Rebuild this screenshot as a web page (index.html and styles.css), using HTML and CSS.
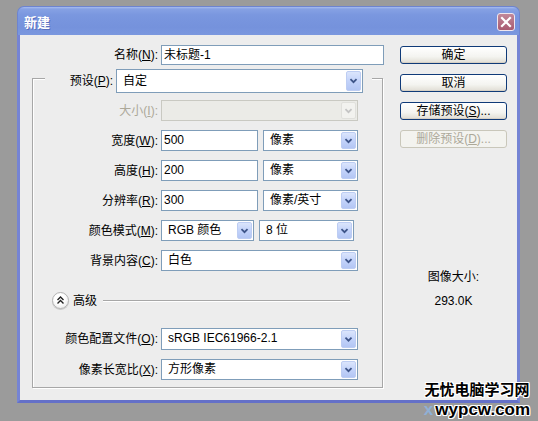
FILE: index.html
```html
<!DOCTYPE html>
<html lang="zh">
<head>
<meta charset="utf-8">
<title>新建</title>
<link rel="stylesheet" href="styles.css">
</head>
<body>
<div class="window">
  <div class="titlebar">
    <span class="title">新建</span>
    <span class="close"><svg width="16" height="16" viewBox="0 0 16 16"><path d="M4 4 L12 12 M12 4 L4 12" stroke="#fff" stroke-width="2.2" stroke-linecap="square"/></svg></span>
  </div>
  <div class="client">
    <div class="left">
      <div class="name-row">
        <span class="lbl lbl-name">名称(<u>N</u>):</span>
        <div class="input w-name">未标题-1</div>
      </div>
      <div class="group">
        <div class="preset-row">
          <span class="lbl lbl-preset">预设(<u>P</u>):</span>
          <div class="select w-preset"><span class="val">自定</span><span class="arrow"><svg width="15" height="17" viewBox="0 0 15 17"><path d="M4 7 L7.5 10.5 L11 7" fill="none" stroke="#3d5488" stroke-width="2"/></svg></span></div>
        </div>
        <div class="row r-size">
          <span class="lbl dis-text">大小(<u>I</u>):</span>
          <div class="select w-full disabled"><span class="val"></span><span class="arrow"><svg width="15" height="17" viewBox="0 0 15 17"><path d="M4 7 L7.5 10.5 L11 7" fill="none" stroke="#c4c4c4" stroke-width="2"/></svg></span></div>
        </div>
        <div class="row">
          <span class="lbl">宽度(<u>W</u>):</span>
          <div class="input w-num">500</div>
          <div class="select w-unit"><span class="val">像素</span><span class="arrow"><svg width="15" height="17" viewBox="0 0 15 17"><path d="M4 7 L7.5 10.5 L11 7" fill="none" stroke="#3d5488" stroke-width="2"/></svg></span></div>
        </div>
        <div class="row">
          <span class="lbl">高度(<u>H</u>):</span>
          <div class="input w-num">200</div>
          <div class="select w-unit"><span class="val">像素</span><span class="arrow"><svg width="15" height="17" viewBox="0 0 15 17"><path d="M4 7 L7.5 10.5 L11 7" fill="none" stroke="#3d5488" stroke-width="2"/></svg></span></div>
        </div>
        <div class="row">
          <span class="lbl">分辨率(<u>R</u>):</span>
          <div class="input w-num">300</div>
          <div class="select w-unit"><span class="val">像素/英寸</span><span class="arrow"><svg width="15" height="17" viewBox="0 0 15 17"><path d="M4 7 L7.5 10.5 L11 7" fill="none" stroke="#3d5488" stroke-width="2"/></svg></span></div>
        </div>
        <div class="row">
          <span class="lbl">颜色模式(<u>M</u>):</span>
          <div class="select w-mode"><span class="val">RGB 颜色</span><span class="arrow"><svg width="15" height="17" viewBox="0 0 15 17"><path d="M4 7 L7.5 10.5 L11 7" fill="none" stroke="#3d5488" stroke-width="2"/></svg></span></div>
          <div class="select w-unit"><span class="val">8 位</span><span class="arrow"><svg width="15" height="17" viewBox="0 0 15 17"><path d="M4 7 L7.5 10.5 L11 7" fill="none" stroke="#3d5488" stroke-width="2"/></svg></span></div>
        </div>
        <div class="row">
          <span class="lbl">背景内容(<u>C</u>):</span>
          <div class="select w-full"><span class="val">白色</span><span class="arrow"><svg width="15" height="17" viewBox="0 0 15 17"><path d="M4 7 L7.5 10.5 L11 7" fill="none" stroke="#3d5488" stroke-width="2"/></svg></span></div>
        </div>
        <div class="adv-row">
          <span class="adv-btn"><svg width="15" height="15" viewBox="0 0 15 15"><path d="M4.5 7 L7.5 4 L10.5 7 M4.5 10.5 L7.5 7.5 L10.5 10.5" fill="none" stroke="#222" stroke-width="1.4"/></svg></span>
          <span class="adv-text">高级</span>
          <span class="adv-line"></span>
        </div>
        <div class="row r-profile">
          <span class="lbl">颜色配置文件(<u>O</u>):</span>
          <div class="select w-full tall"><span class="val">sRGB IEC61966-2.1</span><span class="arrow"><svg width="15" height="18" viewBox="0 0 15 18"><path d="M4 7.5 L7.5 11 L11 7.5" fill="none" stroke="#3d5488" stroke-width="2"/></svg></span></div>
        </div>
        <div class="row">
          <span class="lbl">像素长宽比(<u>X</u>):</span>
          <div class="select w-full"><span class="val">方形像素</span><span class="arrow"><svg width="15" height="17" viewBox="0 0 15 17"><path d="M4 7 L7.5 10.5 L11 7" fill="none" stroke="#3d5488" stroke-width="2"/></svg></span></div>
        </div>
      </div>
    </div>
    <div class="right">
      <div class="btn">确定</div>
      <div class="btn">取消</div>
      <div class="btn">存储预设(<u>S</u>)...</div>
      <div class="btn btn-dis">删除预设(<u>D</u>)...</div>
      <div class="size-label">图像大小:</div>
      <div class="size-value">293.0K</div>
    </div>
  </div>
</div>
<div class="watermark">
  <div class="wm-cn">无忧电脑学习网</div>
  <div class="wm-en"><span class="wm-x">x</span>wypcw.com</div>
</div>
</body>
</html>
```

FILE: styles.css
```css
html, body {
  margin: 0;
  padding: 0;
}
body {
  background: #9b9b9b;
  width: 538px;
  height: 421px;
  overflow: hidden;
  position: relative;
  font-family: "Liberation Sans", "Noto Sans CJK SC", sans-serif;
  font-size: 12px;
  color: #000;
}
u {
  text-decoration: underline;
  text-underline-offset: 1px;
}
.window {
  margin: 6px 0 0 17px;
  width: 503px;
  height: 397px;
  display: flex;
  flex-direction: column;
}
.titlebar {
  height: 29px;
  border-radius: 7px 7px 0 0;
  background: linear-gradient(#a9bdf0 0px, #86a1e4 2px, #7a97df 8px, #7592dc 20px, #7b98df 29px);
  border: 1px solid #6d84d0;
  border-bottom: none;
  box-sizing: border-box;
  display: flex;
  align-items: center;
  justify-content: space-between;
  padding: 0 4px 0 6px;
}
.title {
  color: #fff;
  font-family: "Noto Sans CJK SC", sans-serif;
  font-weight: bold;
  font-size: 13px;
  line-height: 16px;
  text-shadow: 1px 1px 0 #5a6fbf;
  margin-top: 2px;
}
.close {
  width: 18px;
  height: 18px;
  box-sizing: border-box;
  border: 1px solid #efe6ee;
  border-radius: 3px;
  background: linear-gradient(#c1889a, #a85a70);
  display: flex;
  align-items: center;
  justify-content: center;
  margin-top: 1px;
}
.close svg {
  display: block;
}
.client {
  flex: 1;
  display: flex;
  background: #ededed;
  border: 3px solid #7584d4;
  border-top: none;
  border-bottom-color: #6470c8;
}
.left {
  width: 370px;
  padding-top: 10px;
}
.right {
  flex: 1;
  display: flex;
  flex-direction: column;
  align-items: center;
  padding-top: 11px;
}
.lbl {
  display: block;
  text-align: right;
  white-space: nowrap;
  line-height: 16px;
  font-size: 12px;
}
.name-row {
  display: flex;
  align-items: center;
  gap: 3px;
  height: 20px;
}
.lbl-name {
  width: 138px;
}
.input {
  height: 20px;
  box-sizing: border-box;
  border: 1px solid #7f9db9;
  background: #fff;
  padding-left: 2px;
  line-height: 18px;
  white-space: nowrap;
}
.w-name { width: 223px; }
.w-num { width: 97px; }
.group {
  margin: 13px 0 0 12px;
  width: 351px;
  height: 310px;
  box-sizing: border-box;
  border: 1px solid #a7a7a7;
  box-shadow: inset 1px 1px 0 #fff, 1px 1px 0 #fff;
}
.preset-row {
  display: flex;
  align-items: center;
  gap: 3px;
  margin: -10px 0 0 12px;
  width: 327px;
  height: 23px;
  background: #ededed;
}
.lbl-preset {
  width: 68px;
}
.row {
  display: flex;
  align-items: center;
  margin-top: 9px;
  height: 21px;
}
.row .lbl {
  width: 125px;
  margin-right: 3px;
}
.row .input + .select,
.row .select + .select {
  margin-left: 5px;
}
.row .input {
  height: 21px;
  line-height: 19px;
}
.r-size {
  margin-top: 8px;
}
.select {
  display: flex;
  align-items: stretch;
  height: 21px;
  box-sizing: border-box;
  border: 1px solid #7f9db9;
  background: #fff;
}
.select.tall {
  height: 22px;
}
.select .val {
  flex: 1;
  padding-left: 6px;
  line-height: 19px;
  white-space: nowrap;
  overflow: hidden;
}
.select .arrow {
  width: 15px;
  margin: 1px;
  box-sizing: border-box;
  border: 1px solid #bdcdf3;
  border-radius: 2px;
  background: linear-gradient(#dbe5fc, #c3d3fa 50%, #b3c6f4);
  display: flex;
  align-items: center;
  justify-content: center;
}
.select .arrow svg {
  display: block;
}
.select.disabled {
  border-color: #c9c9c2;
  background: #ebebe7;
}
.select.disabled .arrow {
  border-color: #e0e0dc;
  background: #f2f2ef;
}
.w-preset { width: 247px; height: 24px; }
.w-preset .val { line-height: 22px; }
.w-full { width: 197px; }
.w-unit { width: 95px; }
.w-mode { width: 93px; }
.dis-text {
  color: #aca899;
}
.adv-row {
  display: flex;
  align-items: center;
  margin: 21px 0 0 19px;
  height: 17px;
}
.adv-btn {
  width: 17px;
  height: 17px;
  box-sizing: border-box;
  border: 1px solid #b4b4b4;
  border-radius: 50%;
  background: radial-gradient(circle at 45% 40%, #ffffff 40%, #e2e2e2);
  display: flex;
  align-items: center;
  justify-content: center;
  box-shadow: 0 1px 0 #c8c8c8;
}
.adv-btn svg {
  display: block;
}
.adv-text {
  margin-left: 4px;
  line-height: 16px;
}
.adv-line {
  margin-left: 6px;
  width: 247px;
  height: 1px;
  background: #a7a7a7;
  box-shadow: 0 1px 0 #fff;
}
.r-profile {
  margin-top: 19px;
  height: 22px;
}
.btn {
  width: 107px;
  height: 18px;
  box-sizing: border-box;
  border: 1px solid #0f3a78;
  border-radius: 3px;
  background: linear-gradient(#ffffff, #f4f4f0 60%, #e0ddd4);
  text-align: center;
  line-height: 16px;
  margin-bottom: 10px;
  white-space: nowrap;
  box-shadow: inset 0 -1px 0 #d6d0c5;
}
.btn-dis {
  border-color: #c9c7ba;
  color: #aca899;
  background: #f3f3ef;
  box-shadow: none;
}
.size-label {
  margin-top: 111px;
  line-height: 16px;
}
.size-value {
  margin-top: 8px;
  line-height: 16px;
}
.watermark {
  position: absolute;
  left: 422px;
  top: 380px;
  width: 110px;
  text-align: center;
}
.wm-cn {
  font-family: "Noto Sans CJK SC", sans-serif;
  font-weight: bold;
  font-size: 15px;
  line-height: 17px;
  height: 17px;
  color: #000;
  white-space: nowrap;
  text-shadow: -1px -1px 0 #fff, 1px -1px 0 #fff, -1px 1px 0 #fff, 1px 1px 0 #fff, 0 1px 0 #fff, 1px 0 0 #fff, 0 -1px 0 #fff, -1px 0 0 #fff;
}
.wm-en {
  margin-top: 4px;
  font-family: "Liberation Sans", sans-serif;
  font-weight: bold;
  font-size: 17px;
  line-height: 17px;
  color: #000;
  white-space: nowrap;
  text-shadow: -1px -1px 0 #fff, 1px -1px 0 #fff, -1px 1px 0 #fff, 1px 1px 0 #fff, 0 1px 0 #fff, 1px 0 0 #fff, 0 -1px 0 #fff, -1px 0 0 #fff;
}
.wm-x {
  color: #8fb0d6;
  text-shadow: none;
  margin-right: 2px;
}
```
